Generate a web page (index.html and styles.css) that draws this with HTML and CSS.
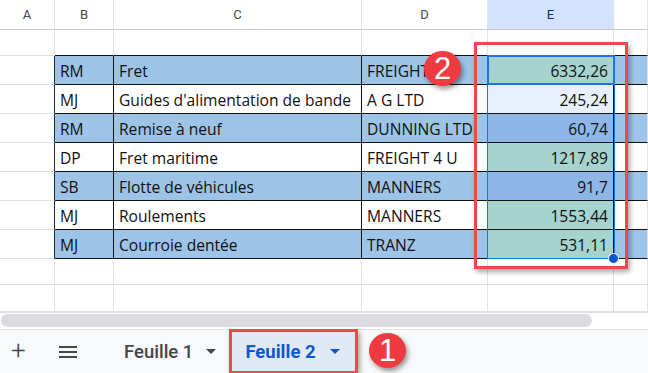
FILE: index.html
```html
<!DOCTYPE html>
<html>
<head>
<meta charset="utf-8">
<link rel="stylesheet" href="styles.css">
</head>
<body>
<div class="app">
  <div class="grid">
    <div class="row head">
      <div class="c">A</div><div class="c">B</div><div class="c">C</div><div class="c">D</div><div class="c hsel">E</div><div class="c"></div>
    </div>
    <div class="row blank top">
      <div class="c"></div><div class="c t"></div><div class="c t"></div><div class="c t"></div><div class="c t"></div><div class="c t"></div>
    </div>
    <div class="row data blue">
      <div class="c a"></div><div class="c">RM</div><div class="c">Fret</div><div class="c">FREIGHT 4 U</div><div class="c num teal">6332,26</div><div class="c"></div>
    </div>
    <div class="row data">
      <div class="c a"></div><div class="c">MJ</div><div class="c">Guides d'alimentation de bande</div><div class="c">A G LTD</div><div class="c num wsel">245,24</div><div class="c"></div>
    </div>
    <div class="row data blue">
      <div class="c a"></div><div class="c">RM</div><div class="c">Remise à neuf</div><div class="c">DUNNING LTD</div><div class="c num bsel">60,74</div><div class="c"></div>
    </div>
    <div class="row data">
      <div class="c a"></div><div class="c">DP</div><div class="c">Fret maritime</div><div class="c">FREIGHT 4 U</div><div class="c num teal">1217,89</div><div class="c"></div>
    </div>
    <div class="row data blue">
      <div class="c a"></div><div class="c">SB</div><div class="c">Flotte de véhicules</div><div class="c">MANNERS</div><div class="c num bsel">91,7</div><div class="c"></div>
    </div>
    <div class="row data">
      <div class="c a"></div><div class="c">MJ</div><div class="c">Roulements</div><div class="c">MANNERS</div><div class="c num teal">1553,44</div><div class="c"></div>
    </div>
    <div class="row data blue">
      <div class="c a"></div><div class="c">MJ</div><div class="c">Courroie dentée</div><div class="c">TRANZ</div><div class="c num teal">531,11</div><div class="c"></div>
    </div>
    <div class="row blank">
      <div class="c"></div><div class="c"></div><div class="c"></div><div class="c"></div><div class="c"></div><div class="c"></div>
    </div>
    <div class="row blank last">
      <div class="c"></div><div class="c"></div><div class="c"></div><div class="c"></div><div class="c"></div><div class="c"></div>
    </div>
  </div>
  <div class="scroll"><div class="thumb"></div></div>
  <div class="tabs">
    <span class="plus">+</span>
    <svg class="menu" width="18" height="12" viewBox="0 0 18 12"><rect x="0" y="0" width="18" height="2" fill="#444746"/><rect x="0" y="5" width="18" height="2" fill="#444746"/><rect x="0" y="10" width="18" height="2" fill="#444746"/></svg>
    <div class="tab">Feuille 1<span class="tri"></span></div>
    <div class="tab active">Feuille 2<span class="tri"></span></div>
  </div>

  <div class="selbox"></div>
  <div class="active-cell"></div>
  <div class="handle"></div>
  <div class="callout col"></div>
  <div class="callout tabbox"></div>
  <div class="badge b2">2</div>
  <div class="badge b1">1</div>
</div>
</body>
</html>
```
FILE: styles.css
```css
* { box-sizing: border-box; }
html, body { margin: 0; padding: 0; }
body { width: 648px; height: 373px; overflow: hidden; background: #fff; }
.app { position: relative; width: 648px; height: 373px; overflow: hidden; }

.grid { display: flex; flex-direction: column; }
.row { display: grid; grid-template-columns: 55px 59px 248px 126px 126px 1fr; }
.c {
  border-right: 1px solid #e1e1e1;
  border-bottom: 1px solid #e1e1e1;
  font-family: "Open Sans", "Lato", sans-serif;
  font-size: 15.6px;
  line-height: 20px;
  color: #111;
  white-space: nowrap;
  overflow: hidden;
  display: flex;
  align-items: flex-end;
  padding: 0 4px 3px 5px;
}
.head { height: 30px; }
.head .c {
  font-family: "Roboto", sans-serif; font-size: 13px; color: #444746;
  justify-content: center; align-items: center; padding: 0;
  border-bottom-color: #c4c7c5; border-right-color: #e1e1e1;
}
.head .hsel { background: #d3e3fd; color: #0b2e6b; }
.blank { height: 26px; }
.blank.last { height: 27px; }
.top .t { border-bottom-color: #111; }
.data { height: 29px; }
.data .c { border-bottom-color: #111; border-right-color: #111; }
.data .c.a { border-bottom-color: #e1e1e1; border-right-color: #1c2a44; }
.data .c:last-child { border-right-color: #e1e1e1; }
.blue .c { background: #9dc3e6; }
.blue .c.a { background: #fff; }
.data .num { justify-content: flex-end; padding-right: 5px; }
.data .c.teal { background: #a6d3cd; }
.data .c.wsel { background: #e8f0fd; }
.data .c.bsel { background: #8db5e6; }

.scroll { height: 17px; border-top: 1px solid #e1e1e1; padding: 1px 0 0 1px; }
.thumb { width: 591px; height: 13px; background: #dadce0; border-radius: 7px; }

.tabs {
  height: 44px; background: #f8f9fa; border-top: 1px solid #e3e3e3;
  display: flex; align-items: center;
  font-family: "Roboto", sans-serif;
}
.plus { font-size: 26px; font-weight: 300; color: #444746; margin-left: 11px; width: 17px; line-height: 1; margin-top: -3px; }
.menu { margin-left: 31px; }
.tab {
  display: flex; align-items: center; height: 43px;
  font-size: 18.5px; font-weight: 500; color: #444746;
}
.tab:nth-of-type(1) { margin-left: 47px; }
.tab .tri {
  width: 0; height: 0; border-left: 5px solid transparent; border-right: 5px solid transparent;
  border-top: 5px solid #444746; margin-left: 13px;
}
.tab.active {
  margin-left: 14px; background: #e1e9f7; color: #0b57d0; font-weight: 700;
  padding: 0 14px 0 15px; width: 126px;
}
.tab.active .tri { border-top-color: #0b57d0; margin-left: 14px; }

.selbox { position: absolute; left: 487px; top: 55px; width: 128px; height: 204px; border: 1px solid #1a73e8; }
.active-cell { position: absolute; left: 487px; top: 55px; width: 128px; height: 30px; border: 2px solid #1a73e8; }
.handle { position: absolute; left: 608px; top: 253px; width: 11px; height: 11px; border-radius: 50%; background: #0b57d0; border: 1px solid #fff; }

.callout { position: absolute; border: 3px solid #f2464b; box-shadow: 2px 3px 5px rgba(0,0,0,0.35); }
.callout.col { left: 474px; top: 42px; width: 154px; height: 227px; }
.callout.tabbox { left: 229px; top: 329px; width: 129px; height: 45px; }

.badge {
  position: absolute; width: 37px; height: 35px; border-radius: 50%;
  background: #ef3b40; color: #fff; font-family: "Liberation Sans", Arial, sans-serif;
  font-size: 31px; display: flex; align-items: center; justify-content: center;
  box-shadow: 2px 3px 5px rgba(0,0,0,0.4);
}
.b2 { left: 424px; top: 51px; }
.b1 { left: 369px; top: 333px; }
```
